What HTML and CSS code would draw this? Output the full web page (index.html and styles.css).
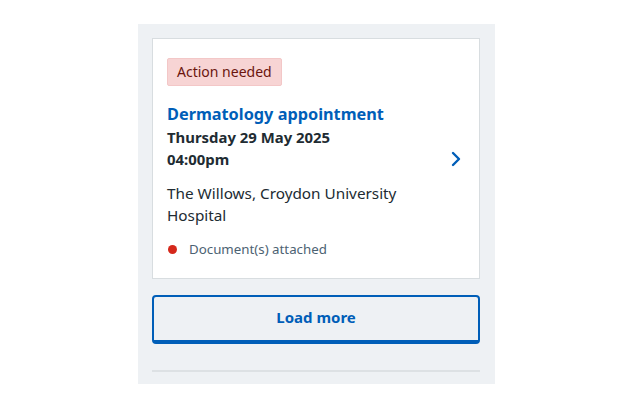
FILE: index.html
```html
<!DOCTYPE html>
<html lang="en">
<head>
<meta charset="utf-8">
<link rel="stylesheet" href="styles.css">
</head>
<body>
<div class="page">
  <section class="panel">
    <article class="card">
      <div class="card-main">
        <span class="tag">Action needed</span>
        <h2 class="title">Dermatology appointment</h2>
        <p class="when">Thursday 29 May 2025<br>04:00pm</p>
        <p class="where">The Willows, Croydon University Hospital</p>
        <p class="doc"><span class="dot"></span>Document(s) attached</p>
      </div>
      <svg class="chev" width="10" height="16" viewBox="0 0 10 16" aria-hidden="true">
        <path d="M2 2 L8 8 L2 14" fill="none" stroke="#005eb8" stroke-width="2.4" stroke-linecap="round" stroke-linejoin="round"/>
      </svg>
    </article>
    <button class="load">Load more</button>
    <hr class="rule">
  </section>
</div>
</body>
</html>
```
FILE: styles.css
```css
* { box-sizing: border-box; }
html, body { margin: 0; background: #ffffff; }
body { font-family: "Noto Sans", "Open Sans", sans-serif; color: #212b32; }
.page { padding: 24px 0 0 138px; }
.panel {
  width: 357px;
  height: 360px;
  background: #eef1f4;
  padding: 14px 15px 0 14px;
  display: flex;
  flex-direction: column;
}
.card {
  background: #ffffff;
  border: 1px solid #d8dde0;
  height: 241px;
  padding: 19px 20px 0 14px;
  display: flex;
  align-items: center;
  justify-content: space-between;
}
.card-main { align-self: flex-start; width: 250px; }
.tag {
  display: inline-block;
  background: #f7d4d4;
  color: #6b140e;
  font-size: 14px;
  line-height: 26px;
  padding: 0 9px;
  border: 1px solid #f3c7c7;
  border-radius: 2px;
}
.title {
  margin: 16px 0 0;
  font-size: 16.3px;
  line-height: 24px;
  color: #005eb8;
  font-weight: 700;
}
.when {
  margin: 0;
  font-size: 14.9px;
  line-height: 22px;
  font-weight: 700;
  color: #212b32;
}
.where {
  margin: 12px 0 0;
  font-size: 15.3px;
  line-height: 22px;
  color: #212b32;
}
.doc {
  margin: 13px 0 0;
  font-size: 13.3px;
  line-height: 20px;
  color: #4c6272;
  display: flex;
  align-items: center;
}
.dot {
  width: 9px; height: 9px; border-radius: 50%;
  background: #d5281b;
  margin: 0 12px 0 1px;
}
.chev { margin-top: -19px; margin-right: -2px; }
.load {
  margin-top: 16px;
  height: 49px;
  background: #eef1f4;
  border: 2px solid #005eb8;
  border-bottom-width: 4px;
  border-radius: 4px;
  color: #005eb8;
  font-family: "Noto Sans", sans-serif;
  font-weight: 700;
  font-size: 15px;
  padding: 0 0 4px;
}
.rule {
  margin: 26px 0 0;
  border: 0;
  height: 2px;
  background: #dde1e4;
}
```
